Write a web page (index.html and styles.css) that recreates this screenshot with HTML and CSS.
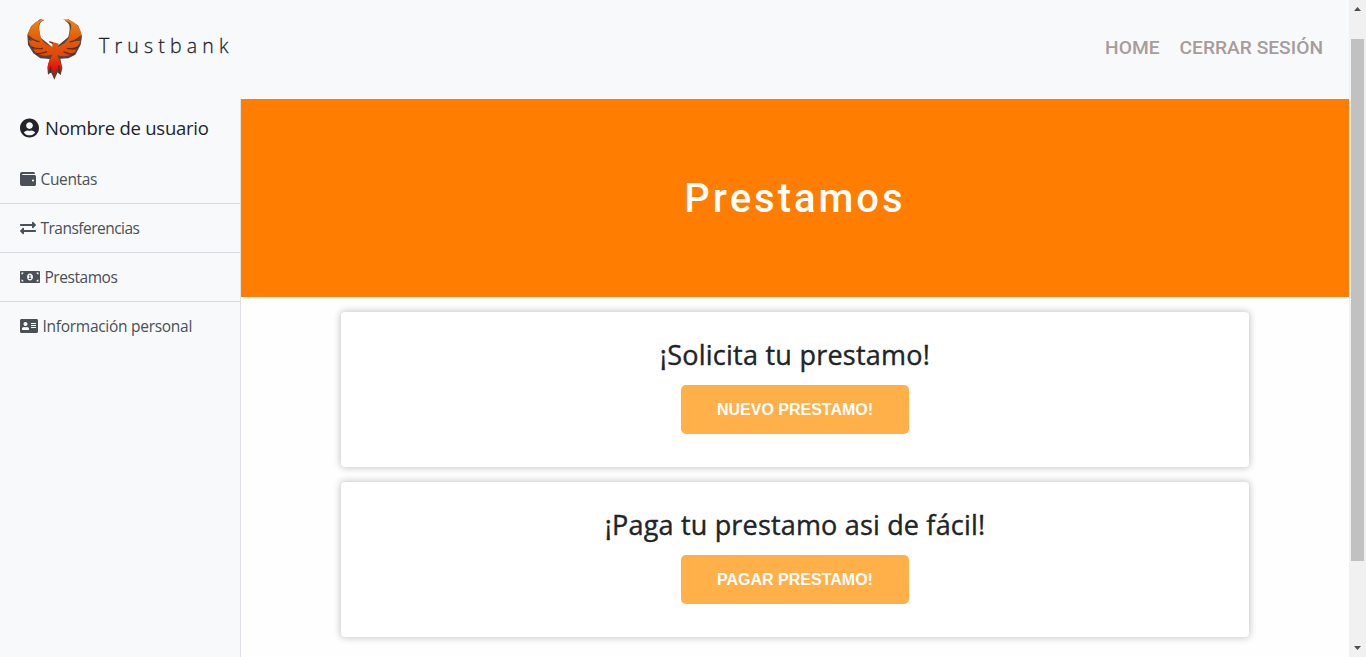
FILE: index.html
```html
<!DOCTYPE html>
<html lang="es">
<head>
<meta charset="utf-8">
<title>Trustbank</title>
<link rel="stylesheet" href="styles.css">
</head>
<body>
<div class="page">
  <header class="topbar">
    <a class="brand">
      <svg class="logo" viewBox="0 0 240 255">
        <defs>
          <linearGradient id="fire" x1="0" y1="40" x2="0" y2="222" gradientUnits="userSpaceOnUse">
            <stop offset="0" stop-color="#f08a14"/><stop offset=".3" stop-color="#e2600c"/><stop offset=".65" stop-color="#e04408"/><stop offset=".8" stop-color="#ed120c"/><stop offset="1" stop-color="#90201c"/>
          </linearGradient>
        </defs>
        <g class="shade">
          <path d="M88 45C66 52 73 76 77 98L103 119 118 132 132 119 160 96C166 72 168 54 149 47L160 43 190 62 201 93 197 119 181 149 160 160 136 161 142 190 137 211 128 202 118 224 108 202 99 209 97 187 104 162 76 160 55 145 39 119 37 89 49 63 75 43Z"/>
        </g>
        <path fill="url(#fire)" d="M87 44C62 43 40 66 39 94L53 107 41 106C43 117 49 126 59 131L74 134 55 133C63 147 79 155 104 151L112 149 99 178 99 196 106 187 107 203 113 191 118 218 124 190 130 203 131 186 138 199 138 177 127 150C150 159 172 151 185 134L166 134C181 130 194 120 197 107L180 109 199 96C200 69 181 44 143 42L165 53C174 67 163 77 163 95 155 111 141 120 130 125L131 116 122 113 102 110 112 117 112 126C96 119 82 111 76 96 77 80 66 69 74 54Z"/>
        <g class="feathers"><path d="M40 92Q56 108 74 110M50 126Q68 133 84 130M64 147Q82 146 96 140M197 94Q181 109 164 111M188 126Q171 134 155 130M177 148Q157 147 145 140M103 110L114 114M107 185L106 204M131 182L132 205"/></g>
      </svg>
      <span class="brand-name">Trustbank</span>
    </a>
    <nav class="topnav"><a>HOME</a><a class="logout">CERRAR SESIÓN</a></nav>
  </header>
  <div class="body">
    <aside class="sidebar">
      <div class="user">
        <svg class="icon-user" viewBox="0 0 496 512"><path d="M248 8C111 8 0 119 0 256s111 248 248 248 248-111 248-248S385 8 248 8zm0 96c48.6 0 88 39.4 88 88s-39.4 88-88 88-88-39.4-88-88 39.4-88 88-88zm0 344c-58.7 0-111.3-26.6-146.5-68.2 18.8-35.4 55.6-59.8 98.5-59.8 2.4 0 4.8.4 7.1 1.1 13 4.2 26.6 6.9 40.9 6.9 14.3 0 28-2.7 40.9-6.9 2.3-.7 4.7-1.1 7.1-1.1 42.9 0 79.7 24.4 98.5 59.8C359.3 421.4 306.7 448 248 448z"/></svg>
        <span>Nombre de usuario</span>
      </div>
      <a class="item"><svg class="icon w16" viewBox="0 0 512 512"><path d="M461.2 128H80c-8.84 0-16-7.16-16-16s7.16-16 16-16h384c8.84 0 16-7.16 16-16 0-26.51-21.49-48-48-48H64C28.65 32 0 60.65 0 96v320c0 35.35 28.65 64 64 64h397.2c28.02 0 50.8-21.53 50.8-48V176c0-26.47-22.78-48-50.8-48zM416 336c-17.67 0-32-14.33-32-32s14.33-32 32-32 32 14.33 32 32-14.33 32-32 32z"/></svg><span class="t-cuentas">Cuentas</span></a>
      <a class="item"><svg class="icon w16" viewBox="0 0 512 512"><path d="M0 168v-16c0-13.255 10.745-24 24-24h360V80c0-21.367 25.899-32.042 40.971-16.971l80 80c9.372 9.373 9.372 24.569 0 33.941l-80 80C409.956 271.982 384 261.456 384 240v-48H24c-13.255 0-24-10.745-24-24zm488 152H128v-48c0-21.314-25.862-32.08-40.971-16.971l-80 80c-9.372 9.373-9.372 24.569 0 33.941l80 80C102.057 463.997 128 453.437 128 432v-48h360c13.255 0 24-10.745 24-24v-16c0-13.255-10.745-24-24-24z"/></svg><span class="t-transfer">Transferencias</span></a>
      <a class="item"><svg class="icon w20" viewBox="0 0 640 512"><path d="M352 288h-16v-88c0-4.42-3.58-8-8-8h-13.58c-4.74 0-9.37 1.4-13.31 4.03l-15.33 10.22a7.994 7.994 0 0 0-2.22 11.09l8.88 13.31a7.994 7.994 0 0 0 11.09 2.22l.47-.31V288h-16c-4.42 0-8 3.58-8 8v16c0 4.42 3.58 8 8 8h64c4.42 0 8-3.58 8-8v-16c0-4.42-3.58-8-8-8zM608 64H32C14.33 64 0 78.33 0 96v320c0 17.67 14.33 32 32 32h576c17.67 0 32-14.33 32-32V96c0-17.67-14.33-32-32-32zM48 400v-64c35.35 0 64 28.65 64 64H48zm0-224v-64h64c0 35.35-28.65 64-64 64zm272 192c-53.02 0-96-50.15-96-112 0-61.86 42.98-112 96-112s96 50.13 96 112c0 61.87-43 112-96 112zm272 32h-64c0-35.35 28.65-64 64-64v64zm0-224c-35.35 0-64-28.65-64-64h64v64z"/></svg><span class="t-prestamos">Prestamos</span></a>
      <a class="item last"><svg class="icon w18" viewBox="0 0 576 512"><path d="M528 32H48C21.5 32 0 53.5 0 80v352c0 26.5 21.5 48 48 48h480c26.5 0 48-21.5 48-48V80c0-26.5-21.5-48-48-48zm-352 96c35.3 0 64 28.7 64 64s-28.7 64-64 64-64-28.7-64-64 28.7-64 64-64zm112 236.8c0 10.6-10 19.2-22.4 19.2H86.4C74 384 64 375.4 64 364.8v-19.2c0-31.8 30.1-57.6 67.2-57.6h5c12.3 5.1 25.7 8 39.8 8s27.6-2.9 39.8-8h5c37.1 0 67.2 25.8 67.2 57.6v19.2zM512 312c0 4.4-3.6 8-8 8H360c-4.4 0-8-3.6-8-8v-16c0-4.4 3.6-8 8-8h144c4.4 0 8 3.6 8 8v16zm0-64c0 4.4-3.6 8-8 8H360c-4.4 0-8-3.6-8-8v-16c0-4.4 3.6-8 8-8h144c4.4 0 8 3.6 8 8v16zm0-64c0 4.4-3.6 8-8 8H360c-4.4 0-8-3.6-8-8v-16c0-4.4 3.6-8 8-8h144c4.4 0 8 3.6 8 8v16z"/></svg><span class="t-info">Información personal</span></a>
    </aside>
    <main class="content">
      <div class="hero"><h1>Prestamos</h1></div>
      <section class="card"><h2>¡Solicita tu prestamo!</h2><button>NUEVO PRESTAMO!</button></section>
      <section class="card"><h2 class="h-paga">¡Paga tu prestamo asi de fácil!</h2><button>PAGAR PRESTAMO!</button></section>
    </main>
  </div>
</div>
<div class="scrollbar">
  <svg class="arrow" viewBox="0 0 17 17"><path d="M5 11h7L8.500 7z"/></svg>
  <div class="track"><div class="thumb"></div></div>
  <svg class="arrow" viewBox="0 0 17 17"><path d="M5 6h7L8.500 10z"/></svg>
</div>
</body>
</html>
```
FILE: styles.css
```css
* { box-sizing: border-box; }
body {
  margin: 0;
  height: 657px;
  display: flex;
  overflow: hidden;
  background: #fefefe;
  color: #212529;
  font-family: "Open Sans", "Noto Sans", sans-serif;
}
.page { width: 1349px; display: flex; flex-direction: column; }
.topbar {
  height: 99px;
  flex: none;
  background: #f8f9fb;
  display: flex;
  justify-content: space-between;
  padding: 5px 26px 0 15px;
}
.brand { display: flex; align-items: flex-start; }
.logo { width: 80px; height: 85px; filter: blur(.4px); }
.shade { fill: #251812; opacity: .8; }
.feathers { fill: none; stroke: #49200f; stroke-width: 4; opacity: .75; }
.brand-name {
  margin: 27px 0 0 4px;
  font-size: 19.500px;
  line-height: 28px;
  font-weight: 300;
  letter-spacing: 5.200px;
  -webkit-text-stroke: .300px #212529;
}
.topnav {
  display: flex;
  gap: 20px;
  padding-top: 32px;
  font: 500 19.200px/22px Roboto, sans-serif;
  color: #a89c9a;
}
.body { flex: 1; display: flex; min-height: 0; }
.sidebar { width: 241px; background: #f8f9fb; border-right: 1px solid #dee2e6; }
.user {
  height: 56px;
  display: flex;
  align-items: center;
  padding: 1px 0 0 20px;
  gap: 6px;
  font-size: 18.500px;
  letter-spacing: -.250px;
}
.icon-user { width: 19px; height: 20px; fill: #212529; }
.item {
  height: 49px;
  display: flex;
  align-items: center;
  padding-left: 20px;
  gap: 4.500px;
  border-bottom: 1px solid #d6d9dd;
  color: #495057;
  font-size: 15.500px;
}
.item.last { border: 0; height: 48px; }
.t-cuentas { letter-spacing: -.350px; }
.t-transfer { letter-spacing: -.520px; }
.t-prestamos { letter-spacing: -.450px; }
.t-info { letter-spacing: -.280px; }
.icon { height: 16px; fill: #495057; }
.w16 { width: 16px; }
.w18 { width: 18px; }
.w20 { width: 20px; }
.content { flex: 1; display: flex; flex-direction: column; align-items: center; }
.hero {
  width: 100%;
  height: 198px;
  flex: none;
  background: #ff7d00;
  display: flex;
  align-items: center;
  justify-content: center;
  padding-top: 2px;
  margin-bottom: 15px;
}
h1 { margin: 0; font: 500 40px/48px Roboto, sans-serif; letter-spacing: 3px; color: #fff; }
.card {
  width: 908px;
  height: 155px;
  flex: none;
  margin-bottom: 15px;
  border-radius: 4px;
  background: #fff;
  box-shadow: 0 0 7px 1px rgba(0, 0, 0, .22);
  display: flex;
  flex-direction: column;
  align-items: center;
  padding-top: 26px;
}
h2 {
  margin: 0 0 13px;
  font-size: 27px;
  line-height: 34px;
  font-weight: 500;
  letter-spacing: .250px;
  -webkit-text-stroke: .400px #212529;
  white-space: nowrap;
}
.h-paga { letter-spacing: .180px; }
button {
  width: 228px;
  height: 49px;
  border: 0;
  border-radius: 5px;
  background: #ffb048;
  color: #fff;
  font: bold 16px "Liberation Sans", Arial, sans-serif;
}
.scrollbar { width: 17px; background: #f1f1f1; display: flex; flex-direction: column; }
.arrow { width: 17px; height: 17px; fill: #505050; }
.track { flex: 1; padding: 22px 2px 0 2px; }
.thumb { height: 522px; background: #c1c1c1; }
```
